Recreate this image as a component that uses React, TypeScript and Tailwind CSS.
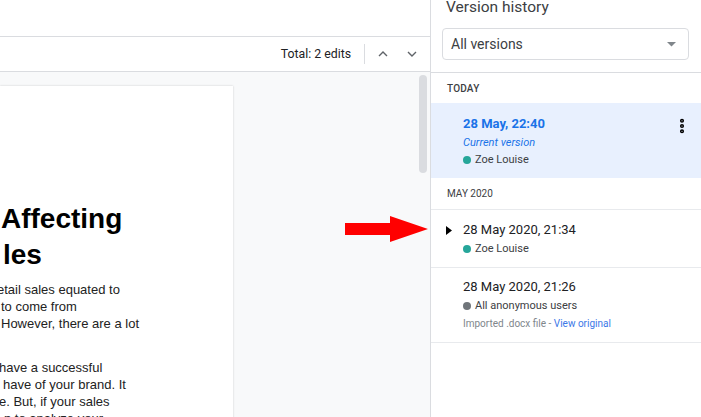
import { EllipsisVertical } from "lucide-react";

function Dot({ color }: { color: string }) {
  return <span className={`inline-block w-[8px] h-[8px] rounded-full ${color}`} />;
}

export default function App() {
  return (
    <div className="w-[701px] h-[417px] overflow-hidden flex bg-white font-['Roboto',sans-serif]">
      {/* Left: document area */}
      <div className="w-[430px] h-full flex flex-col">
        <div className="h-[37px] border-b border-[#dadce0] bg-white shrink-0" />
        <div className="h-[35px] border-b border-[#dadce0] bg-white shrink-0 flex items-center justify-end pr-[12px]">
          <span className="text-[12.3px] text-[#202124] mr-[13px]">Total: 2 edits</span>
          <span className="w-px h-[20px] bg-[#dadce0] mr-[12px]" />
          <svg width="12" height="12" viewBox="0 0 12 12" className="mr-[17px]">
            <path d="M2 8 L6 4 L10 8" fill="none" stroke="#5f6368" strokeWidth="1.4" />
          </svg>
          <svg width="12" height="12" viewBox="0 0 12 12">
            <path d="M2 4 L6 8 L10 4" fill="none" stroke="#5f6368" strokeWidth="1.4" />
          </svg>
        </div>
        <div className="flex-1 bg-[#f8f9fa] flex relative">
          <div className="w-[233px] mt-[14px] bg-white shadow-[0_0_2px_rgba(0,0,0,0.18)] overflow-hidden font-['Liberation_Sans',Arial,sans-serif] text-black">
            <div className="pt-[115px] pl-[1px] text-[28px] font-bold leading-[36px]">
              <div>Affecting</div>
              <div className="pl-[2px]">les</div>
            </div>
            <div className="mt-[8px] text-[13px] leading-[17px] text-[#222]">
              <div className="-ml-[3px]">etail sales equated to</div>
              <div className="pl-[1px]">to come from</div>
              <div className="pl-[1px]">However, there are a lot</div>
              <div className="h-[27px]" />
              <div className="-ml-[1px]">have a successful</div>
              <div className="pl-[3px]">have of your brand. It</div>
              <div className="-ml-[1px]">e. But, if your sales</div>
              <div className="pl-[4px]">n to analyze your</div>
            </div>
          </div>
          <div className="flex-1" />
          <div className="w-[11px] pt-[3px] pr-[3px]">
            <div className="w-[8px] h-[98px] rounded-full bg-[#dadce0]" />
          </div>
          {/* red arrow annotation */}
          <svg width="84" height="30" viewBox="0 0 84 30" className="absolute left-[345px] top-[144px]">
            <polygon points="0,7 45,7 45,0 83,13 45,26 45,19 0,19" fill="#ff0000" />
          </svg>
        </div>
      </div>

      {/* Right: version history panel */}
      <div className="w-[271px] h-full border-l border-[#dadce0] flex flex-col text-[#202124]">
        <div className="h-[73px] border-b border-[#dadce0] px-[11px] shrink-0">
          <div className="pl-[4px] -mt-[3px] text-[15.5px] leading-[20px] text-[#3c4043]">Version history</div>
          <div className="mt-[11px] h-[32px] w-[247px] border border-[#dadce0] rounded-[4px] flex items-center justify-between pl-[8px] pr-[12px]">
            <span className="text-[14px] text-[#3c4043]">All versions</span>
            <svg width="9" height="5" viewBox="0 0 9 5">
              <polygon points="0,0 9,0 4.5,4.5" fill="#80868b" />
            </svg>
          </div>
        </div>
        <div className="h-[30px] pl-[16px] pt-[8px] text-[10px] font-medium text-[#3c4043] tracking-[0.2px]">TODAY</div>
        <div className="h-[75px] bg-[#e8f0fe] pl-[32px] pr-[12px] pt-[12px] flex justify-between">
          <div>
            <div className="text-[13px] font-bold text-[#1a73e8] leading-[18px]">28 May, 22:40</div>
            <div className="text-[11px] italic text-[#1a73e8] leading-[17px] mt-[1px]">Current version</div>
            <div className="flex items-center gap-[4px] text-[11px] leading-[17px] text-[#3c4043]">
              <Dot color="bg-[#26a69a]" />
              Zoe Louise
            </div>
          </div>
          <EllipsisVertical size={18} strokeWidth={3.5} className="text-black mt-[2px] -mr-[2px]" />
        </div>
        <div className="h-[32px] border-b border-[#e8eaed] pl-[16px] pt-[8px] text-[10px] text-[#3c4043]">MAY 2020</div>
        <div className="h-[58px] border-b border-[#e8eaed] pt-[11px] flex">
          <div className="w-[32px] flex justify-center pt-[5px] pl-[4px]">
            <svg width="6" height="9" viewBox="0 0 6 9">
              <polygon points="0,0 6,4.5 0,9" fill="#000" />
            </svg>
          </div>
          <div>
            <div className="text-[13px] leading-[18px]">28 May 2020, 21:34</div>
            <div className="flex items-center gap-[4px] text-[11px] leading-[17px] text-[#3c4043] mt-[1px]">
              <Dot color="bg-[#26a69a]" />
              Zoe Louise
            </div>
          </div>
        </div>
        <div className="h-[75px] border-b border-[#e8eaed] pl-[32px] pt-[10px]">
          <div className="text-[13px] leading-[18px]">28 May 2020, 21:26</div>
          <div className="flex items-center gap-[4px] text-[11px] leading-[17px] text-[#3c4043] mt-[1px]">
            <Dot color="bg-[#70757a]" />
            All anonymous users
          </div>
          <div className="text-[10px] leading-[17px] text-[#80868b] mt-[1px]">
            Imported .docx file - <span className="text-[#3b78e7]">View original</span>
          </div>
        </div>
      </div>
    </div>
  );
}
